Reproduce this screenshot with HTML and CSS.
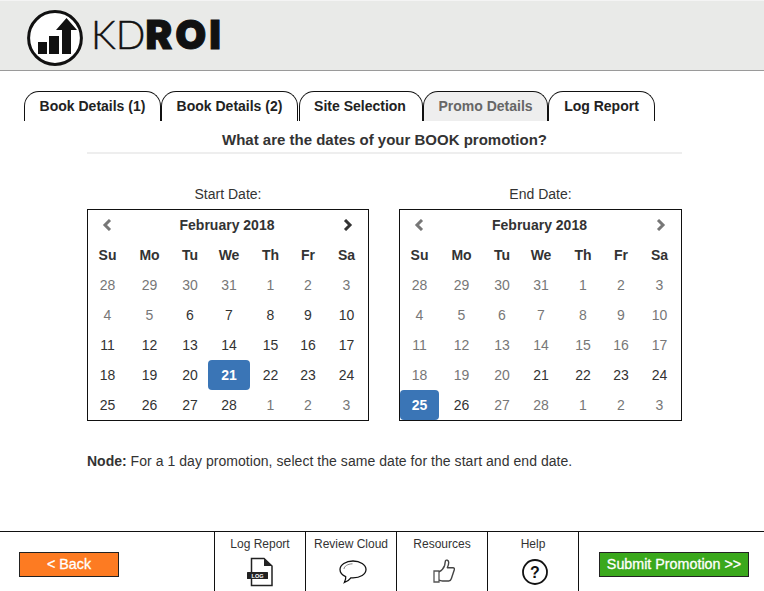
FILE: index.html
```html
<!DOCTYPE html>
<html lang="en">
<head>
<meta charset="utf-8">
<title>KDROI</title>
<link rel="stylesheet" href="styles.css">
</head>
<body>
<header class="topbar">
  <svg class="logo-mark" viewBox="0 0 56 56" width="56" height="56" aria-hidden="true">
    <circle cx="28" cy="28" r="26.400" fill="#fff" stroke="#111" stroke-width="3"/>
    <rect x="11" y="32" width="9" height="12" fill="#111"/>
    <rect x="22" y="26" width="10" height="18" fill="#111"/>
    <path d="M35 44V20h-6L39.500 8 50 20h-6v24z" fill="#111"/>
  </svg>
  <div class="logo-text"><span class="logo-kd">KD</span><span class="logo-roi">ROI</span></div>
</header>

<nav class="tabs">
  <a class="tab tab-a">Book Details (1)</a>
  <a class="tab tab-b">Book Details (2)</a>
  <a class="tab tab-c">Site Selection</a>
  <a class="tab tab-d is-current">Promo Details</a>
  <a class="tab tab-e">Log Report</a>
</nav>

<main class="content">
  <h1 class="question">What are the dates of your BOOK promotion?</h1>
  <div class="pickers">
    <section class="picker">
      <div class="picker-label">Start Date:</div>
      <div class="cal">
        <div class="cal-grid">
          <div class="nav nav-prev muted"><svg viewBox="0 0 10 12" width="10" height="12"><path d="M8 1 3 6l5 5" fill="none" stroke="currentColor" stroke-width="3"/></svg></div>
          <div class="month">February 2018</div>
          <div class="nav nav-next"><svg viewBox="0 0 10 12" width="10" height="12"><path d="M2 1l5 5-5 5" fill="none" stroke="currentColor" stroke-width="3"/></svg></div>
          <div class="dow">Su</div><div class="dow">Mo</div><div class="dow">Tu</div><div class="dow">We</div><div class="dow">Th</div><div class="dow">Fr</div><div class="dow">Sa</div>
          <div class="d off">28</div><div class="d off">29</div><div class="d off">30</div><div class="d off">31</div><div class="d off">1</div><div class="d off">2</div><div class="d off">3</div>
          <div class="d off">4</div><div class="d off">5</div><div class="d">6</div><div class="d">7</div><div class="d">8</div><div class="d">9</div><div class="d">10</div>
          <div class="d">11</div><div class="d">12</div><div class="d">13</div><div class="d">14</div><div class="d">15</div><div class="d">16</div><div class="d">17</div>
          <div class="d">18</div><div class="d">19</div><div class="d">20</div><div class="d sel">21</div><div class="d">22</div><div class="d">23</div><div class="d">24</div>
          <div class="d">25</div><div class="d">26</div><div class="d">27</div><div class="d">28</div><div class="d off">1</div><div class="d off">2</div><div class="d off">3</div>
        </div>
      </div>
    </section>
    <section class="picker picker-end">
      <div class="picker-label">End Date:</div>
      <div class="cal">
        <div class="cal-grid">
          <div class="nav nav-prev muted"><svg viewBox="0 0 10 12" width="10" height="12"><path d="M8 1 3 6l5 5" fill="none" stroke="currentColor" stroke-width="3"/></svg></div>
          <div class="month">February 2018</div>
          <div class="nav nav-next muted"><svg viewBox="0 0 10 12" width="10" height="12"><path d="M2 1l5 5-5 5" fill="none" stroke="currentColor" stroke-width="3"/></svg></div>
          <div class="dow">Su</div><div class="dow">Mo</div><div class="dow">Tu</div><div class="dow">We</div><div class="dow">Th</div><div class="dow">Fr</div><div class="dow">Sa</div>
          <div class="d off">28</div><div class="d off">29</div><div class="d off">30</div><div class="d off">31</div><div class="d off">1</div><div class="d off">2</div><div class="d off">3</div>
          <div class="d off">4</div><div class="d off">5</div><div class="d off">6</div><div class="d off">7</div><div class="d off">8</div><div class="d off">9</div><div class="d off">10</div>
          <div class="d off">11</div><div class="d off">12</div><div class="d off">13</div><div class="d off">14</div><div class="d off">15</div><div class="d off">16</div><div class="d off">17</div>
          <div class="d off">18</div><div class="d off">19</div><div class="d off">20</div><div class="d">21</div><div class="d">22</div><div class="d">23</div><div class="d">24</div>
          <div class="d sel">25</div><div class="d">26</div><div class="d off">27</div><div class="d off">28</div><div class="d off">1</div><div class="d off">2</div><div class="d off">3</div>
        </div>
      </div>
    </section>
  </div>
  <p class="note"><strong>Node:</strong> For a 1 day promotion, select the same date for the start and end date.</p>
</main>

<footer class="footer">
  <div class="foot-side foot-left"><a class="btn btn-back">&lt; Back</a></div>
  <a class="foot-item">
    <span>Log Report</span>
    <svg class="icon-log" viewBox="0 0 28 30" width="28" height="30"><path d="M5.500 15V1.500H18L26 9v19.500H5.500V22" fill="none" stroke="#222" stroke-width="1.500"/><path d="M18 1.500V9h8z" fill="#222"/><rect x="1" y="15" width="21" height="7" rx=".5" fill="#222"/><text class="log-word" x="11.500" y="20.800">LOG</text></svg>
  </a>
  <a class="foot-item">
    <span>Review Cloud</span>
    <svg class="icon-cloud" viewBox="0 0 28 24" width="28" height="24"><path d="M14 1C6.800 1 1 4.800 1 9.600c0 3 2.300 5.600 5.700 7.100.3 1.900-.4 4-1.300 5.800 2.700-1 5-2.700 6.500-4.700.7.100 1.400.1 2.100.1 7.200 0 13-3.600 13-8.300S21.200 1 14 1z" fill="none" stroke="#111" stroke-width="1.300"/><path d="M5 9c.2-2.800 3.500-5 8.500-5.200" fill="none" stroke="#666" stroke-width=".8"/></svg>
  </a>
  <a class="foot-item">
    <span>Resources</span>
    <svg class="icon-thumb" viewBox="0 0 22 24" width="22" height="24"><path d="M1 12h5v11H1z" fill="none" stroke="#555" stroke-width="1.300"/><path d="M6 13c2.500-1.500 4.700-3.500 5.600-6.500.4-1.500.4-3.200.9-4.700.5-1.300 3.200-.7 3.200 1.700 0 2-.7 3.800-1.400 5.200H20c1.200 0 1.700 1 1.300 2l-3 9c-.4 1.200-1.200 2.300-2.600 2.300H9.500c-1.300 0-2.200-.8-3.500-.9" fill="none" stroke="#444" stroke-width="1.400" stroke-linejoin="round"/></svg>
  </a>
  <a class="foot-item">
    <span>Help</span>
    <svg class="icon-help" viewBox="0 0 26 26" width="26" height="26"><circle cx="13" cy="13" r="12" fill="none" stroke="#111" stroke-width="1.800"/><text class="help-mark" x="13" y="18.500">?</text></svg>
  </a>
  <div class="foot-side foot-right"><a class="btn btn-submit">Submit Promotion &gt;&gt;</a></div>
</footer>
</body>
</html>
```
FILE: styles.css
```css
* { box-sizing: border-box; }
html, body { margin: 0; padding: 0; }
body {
  width: 764px;
  height: 591px;
  overflow: hidden;
  display: flex;
  flex-direction: column;
  background: #fff;
  color: #333;
  font-family: "Liberation Sans", Arial, sans-serif;
  font-size: 14px;
}
.topbar {
  height: 71px;
  flex: none;
  display: flex;
  align-items: center;
  padding: 5px 0 0 27px;
  background: #e9eae8;
  border-top: 1px solid #f4f4f4;
  border-bottom: 1px solid #9a9a9a;
}
.logo-mark { flex: none; }
.logo-text {
  margin: -7px 0 0 8px;
  line-height: 1;
  color: #111;
}
.logo-kd {
  font-family: Lato, sans-serif;
  font-size: 39px;
  font-weight: 300;
  -webkit-text-stroke: 0.4px #111;
}
.logo-roi {
  font-family: Inter, sans-serif;
  font-size: 40px;
  font-weight: 900;
  letter-spacing: 3px;
  -webkit-text-stroke: 1px #111;
}
.tabs {
  flex: none;
  display: flex;
  height: 30px;
  margin: 20px 0 0 24px;
}
.tab {
  display: flex;
  justify-content: center;
  padding-top: 6px;
  height: 30px;
  font-weight: 700;
  font-size: 14px;
  color: #222;
  background: #fff;
  border: 1px solid #111;
  border-bottom: 0;
  border-radius: 15px 15px 0 0;
}
.tab-a { width: 137px; }
.tab-b { width: 137px; }
.tab-c { width: 124px; margin-left: 1px; padding-right: 2px; }
.tab-d { width: 125px; }
.tab-e { width: 107px; }
.is-current { background: #eee; color: #666; }
.content { flex: 1; padding: 0 82px 0 87px; }
.question {
  margin: 0;
  height: 33px;
  padding-top: 10px;
  text-align: center;
  font-size: 15px;
  line-height: 17px;
  font-weight: 700;
  color: #333;
  border-bottom: 2px solid #eee;
}
.pickers {
  display: flex;
  gap: 30px;
  margin-top: 32px;
}
.picker { width: 282px; }
.picker-end { width: 283px; }
.picker-label {
  text-align: center;
  font-size: 14px;
  line-height: 16px;
  height: 23px;
}
.cal {
  border: 1px solid #111;
  height: 212px;
}
.cal-grid {
  display: grid;
  grid-template-columns: 39px 45px 36px 42px 41px 34px 43px;
  grid-auto-rows: 30px;
  align-items: center;
  text-align: center;
}
.picker-end .cal-grid {
  grid-template-columns: 39px 45px 36px 42px 42px 34px 43px;
}
.month { grid-column: 2 / span 5; font-weight: 700; padding-left: 2px; }
.nav { display: flex; justify-content: center; color: #333; }
.nav-prev { padding-right: 2px; }
.nav-next { padding-left: 2px; }
.muted { color: #777; }
.dow { font-weight: 700; }
.d {
  height: 30px;
  line-height: 30px;
  color: #333;
  border-radius: 4px;
}
.off { color: #777; }
.sel { background: #3a75b6; color: #fff; font-weight: 700; }
.note { margin: 30px 0 0; line-height: 20px; color: #333; letter-spacing: 0.05px; }
.note strong { font-weight: 700; letter-spacing: 0; }
.footer {
  flex: none;
  height: 60px;
  display: flex;
  border-top: 1px solid #111;
}
.foot-side {
  display: flex;
  align-items: flex-start;
  padding-top: 20px;
}
.foot-left { width: 214px; padding-left: 19px; }
.foot-right { flex: 1; padding-left: 20px; border-left: 1px solid #111; }
.foot-item {
  width: 91px;
  display: flex;
  flex-direction: column;
  align-items: center;
  padding-top: 5px;
  font-size: 12px;
  line-height: 14px;
  border-left: 1px solid #111;
}
.icon-log { margin-top: 6px; }
.icon-cloud { margin: 9px 0 0 4px; }
.icon-thumb { margin: 8px 0 0 3px; }
.icon-help { margin: 8px 0 0 4px; }
.log-word {
  fill: #fff;
  font-family: "Liberation Sans", Arial, sans-serif;
  font-size: 5.500px;
  font-weight: 700;
  text-anchor: middle;
}
.help-mark {
  fill: #111;
  font-family: "Liberation Sans", Arial, sans-serif;
  font-size: 16px;
  font-weight: 700;
  text-anchor: middle;
}
.btn {
  display: flex;
  align-items: center;
  justify-content: center;
  height: 25px;
  padding-bottom: 2px;
  color: #fff;
  font-size: 14.300px;
  font-weight: 400;
  -webkit-text-stroke: 0.3px #fff;
  border: 1px solid #222;
}
.btn-back { width: 100px; background: #fd7b22; }
.btn-submit { width: 150px; background: #3aa81c; }
```
